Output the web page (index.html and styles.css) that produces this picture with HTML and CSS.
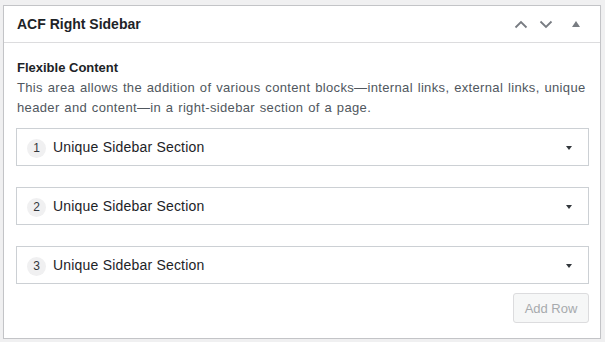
FILE: index.html
```html
<!DOCTYPE html>
<html lang="en">
<head>
  <meta charset="UTF-8">
  <title>ACF Right Sidebar</title>
  <link rel="stylesheet" href="styles.css">
</head>
<body>
  <div class="postbox">
    <div class="postbox-header">
      <h2 class="postbox-title">ACF Right Sidebar</h2>
      <div class="handle-actions">
        <button class="handle-btn" aria-label="Move up">
          <svg width="14" height="9" viewBox="0 0 14 9"><path d="M1.5 7.5 L7 2 L12.5 7.5" fill="none" stroke="#787c82" stroke-width="1.8"/></svg>
        </button>
        <button class="handle-btn" aria-label="Move down">
          <svg width="14" height="9" viewBox="0 0 14 9"><path d="M1.5 1.5 L7 7 L12.5 1.5" fill="none" stroke="#787c82" stroke-width="1.8"/></svg>
        </button>
        <button class="handle-btn toggle" aria-label="Toggle panel">
          <svg width="8" height="6" viewBox="0 0 8 6"><path d="M0 6 L4 0 L8 6 Z" fill="#787c82"/></svg>
        </button>
      </div>
    </div>

    <div class="inside">
      <div class="field-label">Flexible Content</div>
      <p class="field-desc">This area allows the addition of various content blocks—internal links, external links, unique header and content—in a right-sidebar section of a page.</p>

      <div class="layouts">
        <div class="layout">
          <span class="layout-order">1</span>
          <span class="layout-title">Unique Sidebar Section</span>
          <span class="layout-caret"></span>
        </div>
        <div class="layout">
          <span class="layout-order">2</span>
          <span class="layout-title">Unique Sidebar Section</span>
          <span class="layout-caret"></span>
        </div>
        <div class="layout">
          <span class="layout-order">3</span>
          <span class="layout-title">Unique Sidebar Section</span>
          <span class="layout-caret"></span>
        </div>
      </div>

      <div class="actions">
        <button class="add-row" disabled>Add Row</button>
      </div>
    </div>
  </div>
</body>
</html>
```

FILE: styles.css
```css
body {
  margin: 0;
  padding: 5px 4px 0 3px;
  background: #f0f0f1;
  font-family: "Liberation Sans", Arial, sans-serif;
  color: #1d2327;
}

.postbox {
  background: #fff;
  border: 1px solid #c3c4c7;
  box-shadow: 0 1px 1px rgba(0, 0, 0, 0.04);
}

.postbox-header {
  display: flex;
  align-items: center;
  justify-content: space-between;
  height: 36px;
  border-bottom: 1px solid #dcdcde;
}

.postbox-title {
  margin: 0;
  padding-left: 13px;
  font-size: 14px;
  font-weight: bold;
  line-height: 1;
}

.handle-actions {
  display: flex;
  align-items: center;
  padding-right: 12px;
}

.handle-btn {
  display: flex;
  align-items: center;
  justify-content: center;
  width: 25px;
  height: 36px;
  padding: 0;
  border: 0;
  background: none;
}

.handle-btn.toggle {
  width: 30px;
  padding-left: 6px;
}

.inside {
  padding: 15px 11px 15px 12px;
}

.field-label {
  font-size: 13px;
  font-weight: bold;
  line-height: 20px;
  padding-left: 1px;
}

.field-desc {
  margin: 0 0 10px;
  padding-left: 1px;
  font-size: 13px;
  line-height: 20px;
  letter-spacing: 0.35px;
  word-spacing: 0.8px;
  color: #50575e;
}

.layouts {
  display: flex;
  flex-direction: column;
  gap: 21px;
}

.layout {
  display: flex;
  align-items: center;
  height: 36px;
  padding: 0 16px 0 10px;
  border: 1px solid #ccd0d4;
}

.layout-order {
  display: flex;
  align-items: center;
  justify-content: center;
  width: 19px;
  height: 19px;
  margin-top: 2px;
  border-radius: 50%;
  background: #f0f0f1;
  font-size: 12px;
  color: #32373c;
}

.layout-title {
  flex: 1;
  margin-left: 7px;
  font-size: 14px;
  letter-spacing: 0.2px;
  color: #1d2327;
}

.layout-caret {
  width: 0;
  height: 0;
  margin-top: 2px;
  border-left: 3px solid transparent;
  border-right: 3px solid transparent;
  border-top: 4px solid #32373c;
}

.actions {
  display: flex;
  justify-content: flex-end;
  margin-top: 9px;
}

.add-row {
  width: 76px;
  height: 30px;
  padding: 0;
  border: 1px solid #dcdcde;
  border-radius: 3px;
  background: #f6f7f7;
  color: #a7aaad;
  font-family: "Liberation Sans", Arial, sans-serif;
  font-size: 13px;
}
```
